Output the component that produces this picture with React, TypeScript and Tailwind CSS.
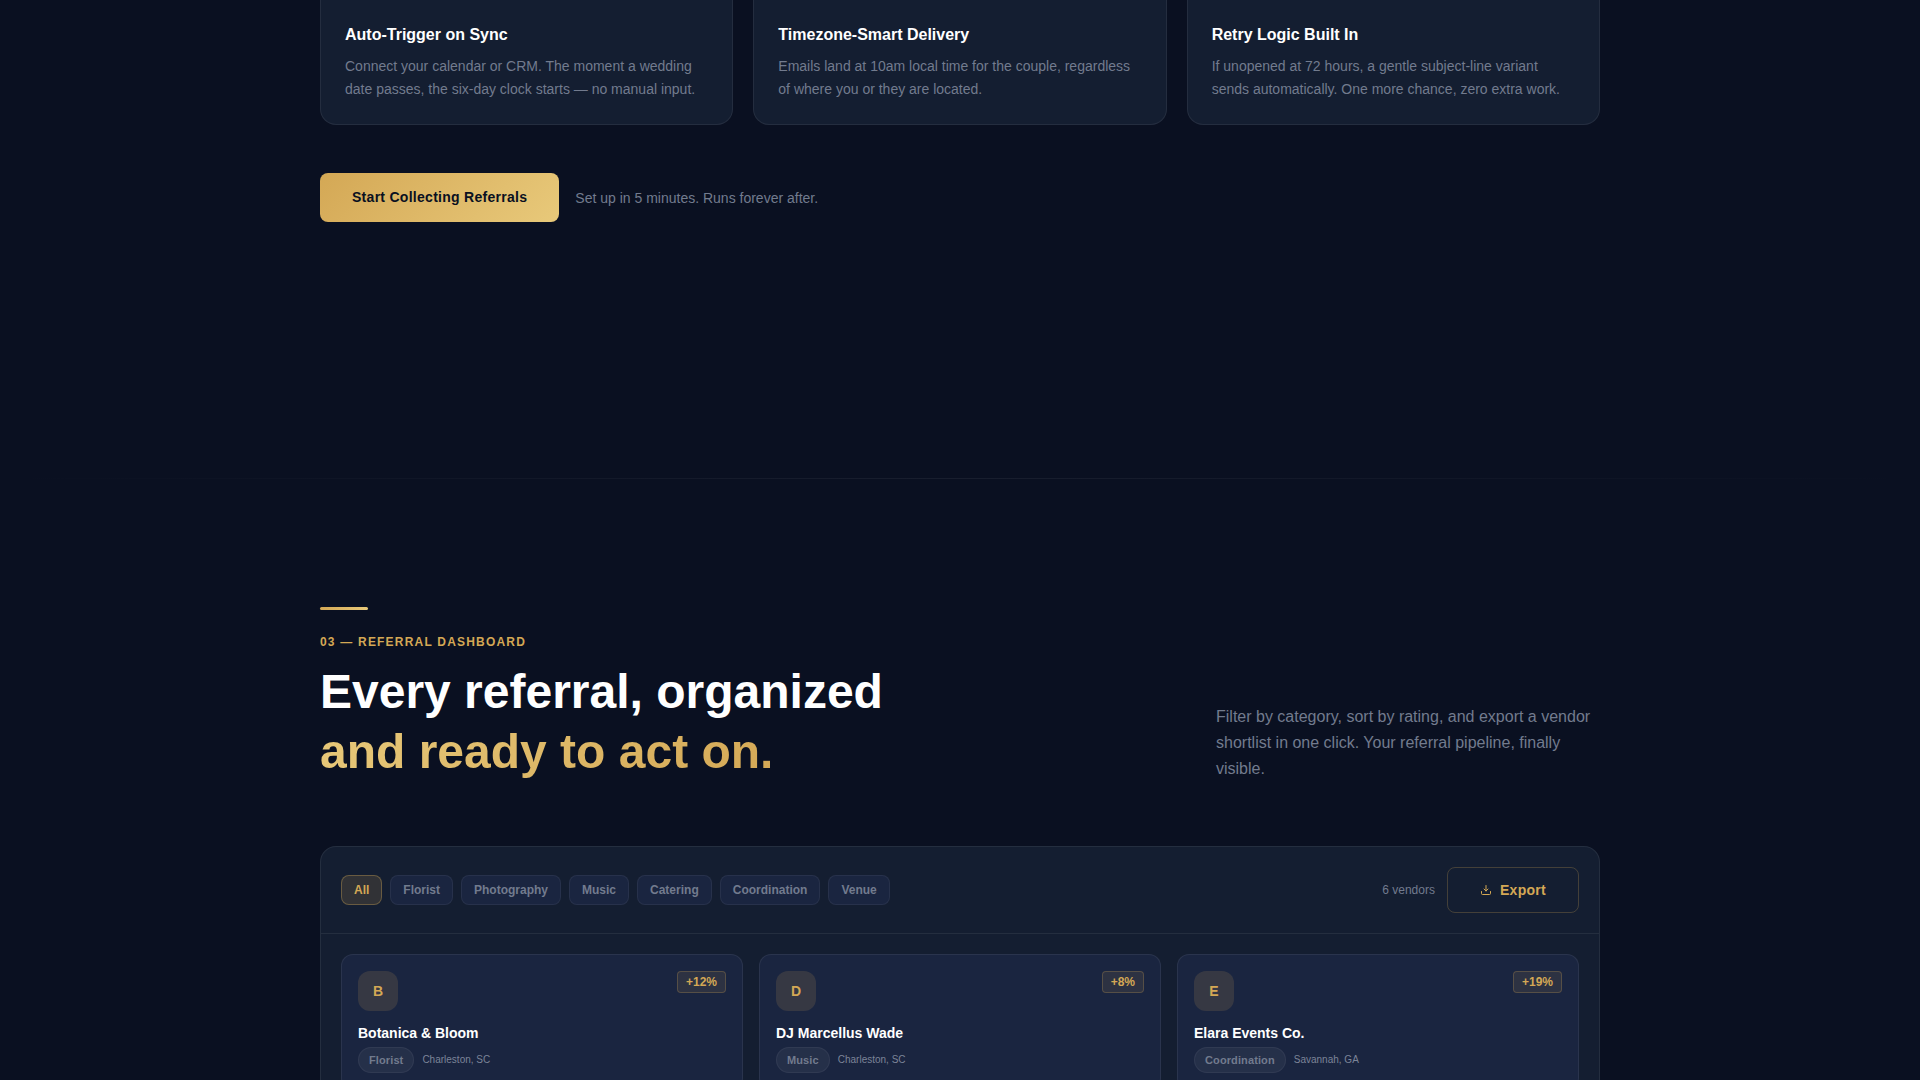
import { useState } from "react";

type TFeature = {
  title: string;
  description: string;
};

type TVendor = {
  name: string;
  category: string;
  location: string;
  growth: string;
};

const FEATURES: TFeature[] = [
  {
    title: "Auto-Trigger on Sync",
    description:
      "Connect your calendar or CRM. The moment a wedding date passes, the six-day clock starts — no manual input.",
  },
  {
    title: "Timezone-Smart Delivery",
    description:
      "Emails land at 10am local time for the couple, regardless of where you or they are located.",
  },
  {
    title: "Retry Logic Built In",
    description:
      "If unopened at 72 hours, a gentle subject-line variant sends automatically. One more chance, zero extra work.",
  },
];

const CATEGORIES = [
  "All",
  "Florist",
  "Photography",
  "Music",
  "Catering",
  "Coordination",
  "Venue",
];

const VENDORS: TVendor[] = [
  {
    name: "Botanica & Bloom",
    category: "Florist",
    location: "Charleston, SC",
    growth: "+12%",
  },
  {
    name: "DJ Marcellus Wade",
    category: "Music",
    location: "Charleston, SC",
    growth: "+8%",
  },
  {
    name: "Elara Events Co.",
    category: "Coordination",
    location: "Savannah, GA",
    growth: "+19%",
  },
];

function ExportIcon() {
  return (
    <svg
      className="w-3 h-3"
      viewBox="0 0 12 12"
      fill="none"
      stroke="currentColor"
      strokeLinecap="round"
      strokeLinejoin="round"
      aria-hidden="true"
    >
      <path d="M6 1.5v5.5M4 5l2 2 2-2" />
      <path d="M1.5 7.5v2a1 1 0 0 0 1 1h7a1 1 0 0 0 1-1v-2" />
    </svg>
  );
}

function FeatureCard({ feature }: { feature: TFeature }) {
  return (
    <article className="rounded-b-2xl border border-t-0 border-white/7 bg-[#141e31] px-6 py-[23px]">
      <h3 className="text-base font-bold text-white">{feature.title}</h3>
      <p className="mt-2 text-sm leading-[23px] text-[#727b8e]">
        {feature.description}
      </p>
    </article>
  );
}

function VendorCard({ vendor }: { vendor: TVendor }) {
  return (
    <article className="rounded-xl border border-white/7 bg-[#1a2540] p-4">
      <div className="flex items-start justify-between">
        <div className="flex w-10 h-10 items-center justify-center rounded-xl bg-[#d4a855]/15 text-sm font-bold text-[#d4a855]">
          {vendor.name.charAt(0)}
        </div>
        <span className="rounded border border-[#d4a855]/25 bg-[#d4a855]/10 px-2 py-0.5 text-xs font-bold text-[#d4a855]">
          {vendor.growth}
        </span>
      </div>
      <h3 className="mt-3 text-sm font-bold text-white">{vendor.name}</h3>
      <div className="mt-1 flex items-center gap-2">
        <span className="rounded-full border border-white/5 bg-white/5 px-2.5 py-1 text-[11px] leading-4 font-bold tracking-[0.01em] text-[#727b8e]">
          {vendor.category}
        </span>
        <span className="text-[10px] leading-4 text-[#7c8498]">
          {vendor.location}
        </span>
      </div>
    </article>
  );
}

export default function App() {
  const [category, setCategory] = useState("All");

  const vendors = VENDORS.filter(
    (vendor) => category === "All" || vendor.category === category
  );

  return (
    <div className="h-screen overflow-hidden bg-[#0a1021] font-['Liberation_Sans',Arial,sans-serif]">
      {/* Automation features */}
      <section className="mx-auto max-w-[1280px] pb-64">
        <div className="grid grid-cols-3 gap-5">
          {FEATURES.map((feature) => (
            <FeatureCard key={feature.title} feature={feature} />
          ))}
        </div>

        <div className="mt-12 flex items-center gap-4">
          <button
            type="button"
            className="rounded-lg bg-linear-135 from-[#d4a855] to-[#e8c97a] px-8 py-3.5 text-sm leading-[21px] font-bold tracking-[0.02em] text-[#0a1021]"
          >
            Start Collecting Referrals
          </button>
          <p className="text-sm text-[#727b8e]">
            Set up in 5 minutes. Runs forever after.
          </p>
        </div>
      </section>

      <div className="h-px bg-linear-to-r from-transparent via-white/6 to-transparent" />

      {/* Referral dashboard */}
      <section className="mx-auto max-w-[1280px] pt-32 pb-32">
        <div className="flex items-end justify-between">
          <div>
            <div className="mb-6 h-[3px] w-12 rounded-full bg-linear-to-r from-[#d4a855] to-[#e8c97a]" />
            <p className="text-xs font-bold tracking-widest text-[#d4a855] uppercase">
              03 — Referral Dashboard
            </p>
            <h2 className="mt-3 text-5xl leading-[60px] font-bold text-white">
              Every referral, organized
              <br />
              <span className="bg-linear-135 from-[#e8c97a] to-[#d4a855] bg-clip-text text-transparent">
                and ready to act on.
              </span>
            </h2>
          </div>
          <p className="max-w-96 text-base leading-[26px] text-[#727b8e]">
            Filter by category, sort by rating, and export a vendor shortlist in
            one click. Your referral pipeline, finally visible.
          </p>
        </div>

        <div className="mt-16 rounded-2xl border border-white/7 bg-[#141e31]">
          {/* Toolbar */}
          <div className="flex items-center justify-between border-b border-white/7 p-5">
            <div className="flex items-center gap-2">
              {CATEGORIES.map((item) => (
                <button
                  key={item}
                  type="button"
                  aria-pressed={category === item}
                  onClick={() => setCategory(item)}
                  className={`rounded-lg border px-3 py-1.5 text-xs font-bold ${category === item ? "border-[#d4a855]/35 bg-[#d4a855]/15 text-[#d4a855]" : "border-white/6 bg-[#1a2540] text-[#727b8e]"}`}
                >
                  {item}
                </button>
              ))}
            </div>
            <div className="flex items-center gap-3">
              <span className="text-xs text-[#727b8e]">6 vendors</span>
              <button
                type="button"
                className="flex items-center gap-2 rounded-lg border border-[#d4a855]/25 px-8 py-3 text-sm font-bold tracking-[0.02em] text-[#d4a855]"
              >
                <ExportIcon />
                Export
              </button>
            </div>
          </div>

          {/* Vendor grid */}
          <div className="grid grid-cols-3 gap-4 p-5">
            {vendors.map((vendor) => (
              <VendorCard key={vendor.name} vendor={vendor} />
            ))}
          </div>
        </div>
      </section>
    </div>
  );
}
